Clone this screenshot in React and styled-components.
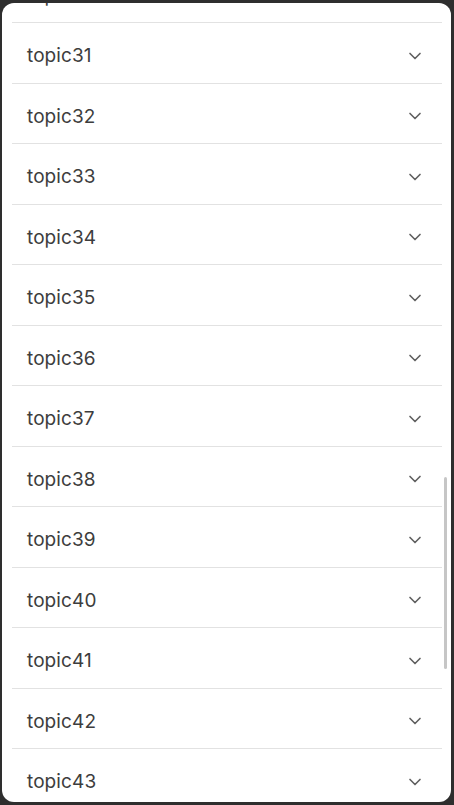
import React, { useLayoutEffect, useRef, useState } from "react";
import styled, { createGlobalStyle } from "styled-components";
import { ChevronDown } from "lucide-react";

const Global = createGlobalStyle`
  html, body { margin: 0; padding: 0; height: 100%; }
  body {
    background: #2e2e2e;
    font-family: Inter, "Noto Sans", sans-serif;
  }
  #root { height: 100%; }
`;

const Frame = styled.div`
  box-sizing: border-box;
  height: 100vh;
  padding: 3px 3px 3px 2px;
`;

const Panel = styled.div`
  position: relative;
  height: 100%;
  background: #ffffff;
  border-radius: 12px;
  overflow: hidden;
`;

const Scroller = styled.div`
  height: 100%;
  overflow-y: auto;
  box-sizing: border-box;
  padding: 180px 9px 0 10px;
  scrollbar-width: none;
  &::-webkit-scrollbar { display: none; }
`;

const Thumb = styled.div`
  position: absolute;
  right: 4px;
  width: 3.5px;
  border-radius: 2px;
  background: #c6c6c6;
  pointer-events: none;
`;

const Item = styled.div`
  box-sizing: border-box;
  height: 60.5px;
  border-bottom: 1px solid #e2e2e2;
  display: flex;
  align-items: center;
  justify-content: space-between;
  padding: 6px 17px 0 15px;
  cursor: pointer;
`;

const Title = styled.span`
  font-size: 19px;
  color: #3d3d3d;
  letter-spacing: 0.1px;
`;

const Chevron = styled(ChevronDown)`
  color: #606060;
  flex: none;
`;

const topics = Array.from({ length: 52 }, (_, i) => `topic${i + 1}`);

export default function App() {
  const ref = useRef(null);
  const [thumb, setThumb] = useState({ top: 0, height: 0 });

  const update = () => {
    const el = ref.current;
    if (!el) return;
    const h = el.clientHeight;
    const total = el.scrollHeight;
    setThumb({
      top: (el.scrollTop / total) * h,
      height: (h * h) / total,
    });
  };

  useLayoutEffect(() => {
    if (ref.current) ref.current.scrollTop = 1975;
    update();
  }, []);

  return (
    <>
      <Global />
      <Frame>
        <Panel>
          <Scroller ref={ref} onScroll={update}>
            {topics.map((t) => (
              <Item key={t}>
                <Title>{t}</Title>
                <Chevron size={20} strokeWidth={2} />
              </Item>
            ))}
          </Scroller>
          <Thumb style={{ top: thumb.top, height: thumb.height }} />
        </Panel>
      </Frame>
    </>
  );
}
